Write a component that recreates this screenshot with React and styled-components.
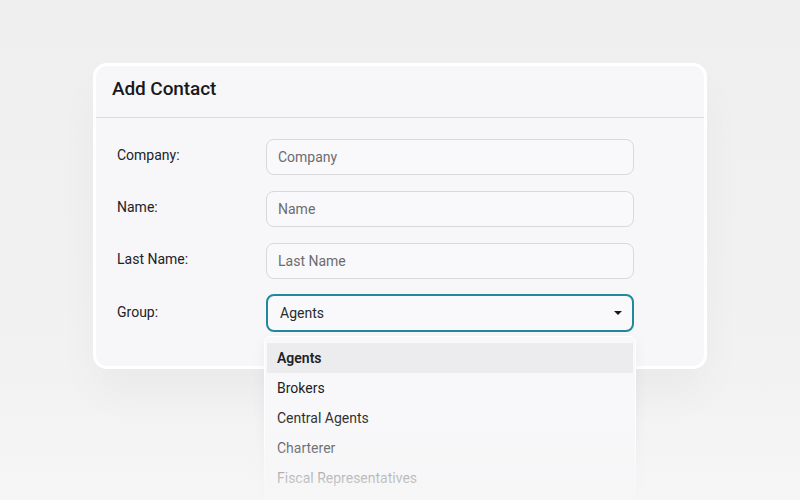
import React, { useState } from "react";
import styled, { createGlobalStyle } from "styled-components";

const GlobalStyle = createGlobalStyle`
	html, body{
		margin:0;
		padding:0;
	}
	body{
		font-family:Roboto, "Noto Sans", sans-serif;
		color:#1f1f22;
	}
`;

const Page = styled.div`
	position:relative;
	width:800px;
	height:500px;
	overflow:hidden;
	background:linear-gradient(180deg, #efefef 0%, #f1f1f2 60%, #f4f4f5 100%);
	padding:63px 0 0 93px;
	box-sizing:border-box;
`;

const Card = styled.div`
	width:614px;
	box-sizing:border-box;
	border:3px solid #ffffff;
	border-radius:14px;
	background:#f7f7f9;
	box-shadow:0 24px 40px rgba(0,0,0,0.035);
`;

const Header = styled.div`
	height:52px;
	box-sizing:border-box;
	display:flex;
	align-items:center;
	padding:0 16px 7px;
	border-bottom:1.5px solid #dcdcdf;
	h2{
		margin:0;
		font-size:19px;
		font-weight:500;
		color:#19191b;
		letter-spacing:-0.1px;
	}
`;

const Body = styled.div`
	display:flex;
	flex-direction:column;
	gap:16px;
	padding:21px 0 34px 21px;
`;

const Row = styled.div`
	display:grid;
	grid-template-columns:149px 368px;
	align-items:center;
	position:relative;
`;

const Label = styled.label`
	font-size:14px;
	color:#222225;
	margin-top:-4px;
`;

const Field = styled.input`
	box-sizing:border-box;
	height:36px;
	width:100%;
	border:1px solid #d9d9dc;
	border-radius:8px;
	background:#f9f9fb;
	padding:0 11px;
	font-family:inherit;
	font-size:14px;
	color:#222;
	outline:none;
	&::placeholder{
		color:#6c6c70;
	}
`;

const Select = styled.div`
	position:relative;
	box-sizing:border-box;
	height:38px;
	margin-top:-1px;
	border:2px solid #1f8a9c;
	border-radius:8px;
	background:#f9f9fb;
	display:flex;
	align-items:center;
	justify-content:space-between;
	padding:0 10px 0 12px;
	font-size:14px;
	color:#2a2a2d;
`;

const Caret = styled.span`
	width:0;
	height:0;
	border-left:4px solid transparent;
	border-right:4px solid transparent;
	border-top:4.5px solid #1a1a1a;
`;

const Menu = styled.ul`
	position:absolute;
	left:147px;
	top:41px;
	width:372px;
	margin:0;
	padding:6px 2px 40px;
	box-sizing:border-box;
	list-style:none;
	background:#f8f8fa;
	border:1px solid #ffffff;
	border-radius:6px;
	box-shadow:0 4px 14px rgba(0,0,0,0.05);
	z-index:2;
`;

const Option = styled.li`
	height:30px;
	display:flex;
	align-items:center;
	padding:0 10px;
	font-size:14px;
	font-weight:${p => (p.$active ? 600 : 400)};
	color:#212124;
	background:${p => (p.$active ? "#ececef" : "transparent")};
`;

// bottom haze that washes out the last menu items
const Fade = styled.div`
	position:absolute;
	left:0;
	right:0;
	bottom:0;
	height:90px;
	background:linear-gradient(180deg, rgba(246,246,247,0) 0%, rgba(246,246,247,0.3) 35%, rgba(246,246,247,0.72) 75%, rgba(246,246,247,0.9) 100%);
	pointer-events:none;
	z-index:3;
`;

const fields = [
	{label: "Company:", placeholder: "Company"},
	{label: "Name:", placeholder: "Name"},
	{label: "Last Name:", placeholder: "Last Name"}
];

const groups = ["Agents", "Brokers", "Central Agents", "Charterer", "Fiscal Representatives"];

const App = () => {
	const [group] = useState("Agents");

	return (
		<>
			<GlobalStyle />
			<Page>
				<Card>
					<Header>
						<h2>Add Contact</h2>
					</Header>

					<Body>
						{fields.map((f) => (
							<Row key={f.label}>
								<Label>{f.label}</Label>
								<Field placeholder={f.placeholder} />
							</Row>
						))}

						<Row>
							<Label>Group:</Label>
							<Select>
								{group}
								<Caret />
							</Select>

							<Menu>
								{groups.map((g) => (
									<Option key={g} $active={g === group}>{g}</Option>
								))}
							</Menu>
						</Row>
					</Body>
				</Card>

				<Fade />
			</Page>
		</>
	);
};

export default App;
